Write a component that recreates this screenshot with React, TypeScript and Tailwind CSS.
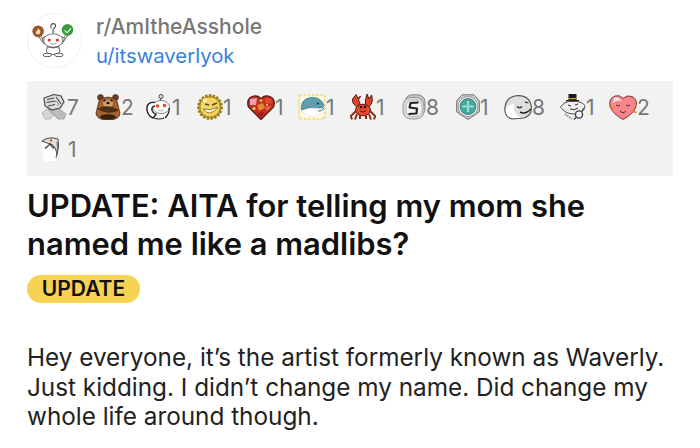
import type { ReactNode } from "react";

const Handshake = () => (
  <svg viewBox="0 0 26 26" className="w-[26px] h-[26px]">
    <path d="M1 19 L10 12 L16 18 L9 25 L4 25 Z" fill="#d6d6d6" stroke="#a0a0a0" strokeWidth="0.7" />
    <path d="M13 11 L25 20 L23 25 L17 25 L7 16 Z" fill="#bdbdbd" stroke="#8f8f8f" strokeWidth="0.7" />
    <path d="M3 4 L13 0.5 L20 2 L23 8 L19 14 L11 16 L4 12 Z" fill="#dcdcdc" stroke="#4a4a4a" strokeWidth="1.2" />
    <path d="M6 5.5 L13 4 M5.5 8.5 L14 7 M7 12 L14 10.5 M15 3 L20 10" stroke="#4a4a4a" strokeWidth="1.1" fill="none" />
    <path d="M14 7 Q18 8 17 12" stroke="#777" strokeWidth="0.8" fill="none" />
  </svg>
);

const Bear = () => (
  <svg viewBox="0 0 26 26" className="w-[26px] h-[26px]">
    <circle cx="5.5" cy="3.5" r="3" fill="#6b3d1c" stroke="#2e1808" strokeWidth="0.5" />
    <circle cx="20.5" cy="3.5" r="3" fill="#6b3d1c" stroke="#2e1808" strokeWidth="0.5" />
    <path d="M4 7 Q13 -1 22 7 L25 19 Q25 26 13 26 Q1 26 1 19 Z" fill="#a4632f" stroke="#3f2410" strokeWidth="0.7" />
    <ellipse cx="13" cy="9.5" rx="5" ry="3.5" fill="#d0a273" />
    <circle cx="9.5" cy="6.5" r="1.1" fill="#1d1008" />
    <circle cx="16.5" cy="6.5" r="1.1" fill="#1d1008" />
    <ellipse cx="13" cy="9" rx="1.7" ry="1.2" fill="#1d1008" />
    <path d="M3 15 Q13 10 23 16 Q14 21 3 15 Z" fill="#63381a" stroke="#2e1808" strokeWidth="0.7" />
    <path d="M7 15 Q14 14 20 17" stroke="#2e1808" strokeWidth="0.8" fill="none" />
    <ellipse cx="13" cy="23" rx="8" ry="2.8" fill="#3a200e" />
  </svg>
);

const Snoo = () => (
  <svg viewBox="0 0 26 26" className="w-[26px] h-[26px]">
    <circle cx="15" cy="2.5" r="2" fill="#e8e8e8" stroke="#444" strokeWidth="1" />
    <path d="M14.5 4.5 L14 8" stroke="#444" strokeWidth="1" />
    <ellipse cx="15" cy="13" rx="8.5" ry="6.5" fill="#fff" stroke="#666" strokeWidth="0.8" />
    <circle cx="11.5" cy="12" r="1.8" fill="#e8492a" />
    <circle cx="18.5" cy="11.5" r="1.8" fill="#e8492a" />
    <path d="M12.5 16 Q15 18 18 16" stroke="#999" strokeWidth="0.8" fill="none" />
    <path d="M9 8.5 Q1.5 7.5 0.8 14 Q0.8 21 7 24 L10 20.5 Q5 18 6 14 Q7 12 9 12" fill="#fff" stroke="#222" strokeWidth="1.4" />
    <path d="M23 14 Q24 19 19 24" stroke="#222" strokeWidth="1.4" fill="none" />
    <path d="M8 24 Q13 26 18 24" stroke="#222" strokeWidth="1.2" fill="none" />
  </svg>
);

const Sun = () => (
  <svg viewBox="0 0 26 26" className="w-[26px] h-[26px]">
    <circle cx="13" cy="13" r="11.6" fill="#c9a53a" strokeDasharray="2.4 1.4" stroke="#9a7d22" strokeWidth="2.6" />
    <circle cx="13" cy="13" r="10" fill="#f3d565" stroke="#a88520" strokeWidth="0.8" />
    <path d="M8 10 L12 11 M15 11 L20 9" stroke="#5e4a10" strokeWidth="1.4" />
    <path d="M6 15 Q13 24 21 13 Q14 17 6 15 Z" fill="#fff8d8" stroke="#7f6716" strokeWidth="0.8" />
    <circle cx="8" cy="6.5" r="2.2" fill="#fff0a8" />
  </svg>
);

const GemHeart = () => (
  <svg viewBox="0 0 28 26" className="w-[28px] h-[26px]">
    <path d="M14 25.5 L1.5 13 Q-1 5 5 2.5 Q11 0.5 14 5 Q17 0.5 23 2.5 Q29 5 26.5 13 Z" fill="#c22f1f" stroke="#5c1a12" strokeWidth="1.3" />
    <path d="M3 5 L10 4 L9 11 L3 11 Z" fill="#e6a0bd" />
    <path d="M10 11 L16 9 L18 14 L12 17 Z" fill="#e9862f" />
    <path d="M18 4 L25 5 L24 10 L18 9 Z" fill="#de4a32" />
    <path d="M11 19 L17 18 L14 23 Z" fill="#8f1e14" />
    <path d="M18 13 L25 12 L20 17 Z" fill="#eb6a3e" />
    <circle cx="7" cy="14.5" r="1.6" fill="#f5c75a" />
    <circle cx="14" cy="6.5" r="1.3" fill="#f5c75a" />
    <circle cx="20" cy="11" r="1" fill="#f9e2a5" />
  </svg>
);

const SealStamp = () => (
  <svg viewBox="0 0 28 26" className="w-[28px] h-[26px]">
    <rect x="1.2" y="1.2" width="25.6" height="23.6" fill="#fffbe0" stroke="#efdf93" strokeWidth="2" strokeDasharray="3 1.2" />
    <ellipse cx="14.5" cy="13" rx="11.5" ry="9.5" fill="#fff" stroke="#c9d6d8" strokeWidth="0.5" />
    <path d="M3.5 16 Q2.5 4 14 3.5 Q24 3.5 26 12 Q25 14.5 21 14 Q12 12 3.5 16 Z" fill="#5c9fb0" stroke="#37707e" strokeWidth="0.7" />
    <path d="M20 17 Q23 18 26 14" stroke="#37707e" strokeWidth="1" fill="none" />
    <circle cx="20" cy="9.5" r="1" fill="#123" />
  </svg>
);

const Crab = () => (
  <svg viewBox="0 0 26 26" className="w-[26px] h-[26px]">
    <path d="M6 0.5 L2.5 5 Q2 11 8 13 L10 9 L8.5 6 L10.5 2 L8 4.5 Z" fill="#e0452c" stroke="#5b1a10" strokeWidth="1" />
    <path d="M17 0 L15.5 6 L15.5 11 L19 13 Q24 8 21.5 1 L19 5 Z" fill="#e0452c" stroke="#5b1a10" strokeWidth="1" />
    <ellipse cx="13" cy="16" rx="7.5" ry="5.8" fill="#e04a2e" stroke="#5b1a10" strokeWidth="1" />
    <path d="M6 17 L0.8 22 L2 25.5 M7 20 L5 25.5 M20 17 L25.2 22 L24 25.5 M19 20 L21 25.5 M10 21 L10 25 M16 21 L16 25" stroke="#8c2a18" strokeWidth="2" fill="none" />
    <circle cx="11" cy="13" r="1.2" fill="#1d0b07" />
    <circle cx="15" cy="13" r="1.2" fill="#1d0b07" />
    <path d="M10 17 Q13 19 16 17" stroke="#5b1a10" strokeWidth="0.9" fill="none" />
  </svg>
);

const Coin = () => (
  <svg viewBox="0 0 24 26" className="w-[24px] h-[26px]">
    <rect x="3" y="0.8" width="20" height="21" rx="7" fill="#c4c4c4" stroke="#8a8a8a" strokeWidth="1" />
    <rect x="1" y="3.5" width="21" height="21.5" rx="8" fill="#dedede" stroke="#949494" strokeWidth="1" />
    <rect x="4" y="6" width="16" height="16.5" rx="6" fill="#f4f4f4" stroke="#a6a6a6" strokeWidth="0.8" />
    <path d="M16.5 8.5 L8.5 9 L7.5 13.5 L15 14.5 L14.5 19.5 L6.5 20" stroke="#222" strokeWidth="2.1" fill="none" strokeLinejoin="round" />
  </svg>
);

const Medal = () => (
  <svg viewBox="0 0 24 26" className="w-[24px] h-[26px]">
    <path d="M3 4 L6 0.8 L18 0.8 L21 4 L23.3 7 L23.3 18 L12 25.5 L0.7 18 L0.7 7 Z" fill="#c9c9c9" stroke="#777" strokeWidth="1" />
    <circle cx="12" cy="12.5" r="10" fill="#f0f0f0" stroke="#8c8c8c" strokeWidth="0.8" />
    <circle cx="12" cy="12.5" r="8" fill="#45a9a0" stroke="#2c7a73" strokeWidth="0.8" />
    <path d="M12 7 L12 18 M6.5 12.5 L17.5 12.5" stroke="#c5ece8" strokeWidth="1.6" />
    <circle cx="12" cy="12.5" r="2.2" fill="#8ad6ce" />
  </svg>
);

const SealFace = () => (
  <svg viewBox="0 0 28 26" className="w-[28px] h-[26px]">
    <path d="M0.8 15 Q1.5 2.5 14 1.5 Q25.5 1.5 27.3 12 Q28 22 20 24 L8 25 Q0.8 23 0.8 15 Z" fill="#dedede" stroke="#4c4c4c" strokeWidth="1.1" />
    <path d="M1.6 16 Q2.5 24 9 24 L17 24 Q9 20 10 10 Q3.5 10 1.6 16 Z" fill="#fff" />
    <path d="M13 12.5 Q15.5 15 18 12.5 M21 8 L24.5 9" stroke="#222" strokeWidth="1.2" fill="none" />
    <path d="M16 18 Q21 21 27 15" stroke="#222" strokeWidth="1.5" fill="none" />
  </svg>
);

const TopHat = () => (
  <svg viewBox="0 0 26 26" className="w-[26px] h-[26px]">
    <rect x="8.5" y="0" width="8" height="6" fill="#1b1b1b" />
    <rect x="8.5" y="4" width="8" height="1.2" fill="#c9a92c" />
    <rect x="6" y="6" width="13" height="1.5" fill="#1b1b1b" />
    <path d="M0.5 13 Q5 6.5 13 7.5 Q23 7 25 12 Q24 20 14 20 Q5 20 0.5 13 Z" fill="#ededed" stroke="#555" strokeWidth="1" />
    <path d="M8 11 L11 12 M15 11 L18 10 M10 15 Q14 17 18 14" stroke="#333" strokeWidth="1" fill="none" />
    <circle cx="19" cy="20.5" r="3.6" fill="#f2f2f2" stroke="#444" strokeWidth="1.4" />
    <path d="M16.5 23 L14 25.5 M22 17 L24 14" stroke="#444" strokeWidth="1.3" />
    <path d="M5 20 L12 25" stroke="#8f8f8f" strokeWidth="2" strokeDasharray="1.5 1" />
  </svg>
);

const FaceHeart = () => (
  <svg viewBox="0 0 28 26" className="w-[28px] h-[26px]">
    <path d="M14 25.5 Q4 20 1.2 13 Q-0.8 4.5 6 2 Q11 0.5 14 4.5 Q18 0.5 23 2.5 Q29.5 5.5 26.5 14 Q23 21 14 25.5 Z" fill="#f6868a" stroke="#7d3b3e" strokeWidth="1" />
    <path d="M5 3.5 Q10 2.5 13 7 Q8 5 3.5 9.5 Z" fill="#ffdcdc" />
    <path d="M7 11 Q9 13 11 11 M17 11 Q19 13 21 11 M11 17 Q14 20.5 17 17" stroke="#5c2a2c" strokeWidth="1" fill="none" />
    <path d="M0.5 13 L5.5 14.5 M22.5 17 L27.5 18.5" stroke="#ee7a22" strokeWidth="1.5" />
  </svg>
);

const Dolphin = () => (
  <svg viewBox="0 0 26 26" className="w-[26px] h-[26px]">
    <path d="M3 5 Q10 0 19 3 Q20 10 18 18 L17 25 L5 25.5 Q3 15 3 5 Z" fill="#fff" />
    <path d="M3 5 Q10 0 19 3 Q20.5 10 18 19 Q17 10 12 8 Q7 7 3 5 Z" fill="#e0e0e0" stroke="#444" strokeWidth="1" />
    <circle cx="12" cy="4.5" r="1.2" fill="#e8492a" />
    <path d="M6 12.5 L11 8 L15 12.5" stroke="#333" strokeWidth="1.2" fill="none" />
    <path d="M18 6 Q19.5 14 17 22" stroke="#6a6a6a" strokeWidth="1.2" fill="none" />
  </svg>
);

const Avatar = () => (
  <svg viewBox="0 0 55 55" className="w-full h-full">
    <path d="M11 22 L18 31 M41 21 L34 31" stroke="#555" strokeWidth="2.6" />
    <path d="M11 22 L18 31 M41 21 L34 31" stroke="#fff" strokeWidth="1.2" />
    <circle cx="10.5" cy="18" r="6" fill="#a0562a" />
    <path d="M8 19 L11 15 L13 18 L12 21 L9 21 Z" fill="#f2dfcb" />
    <circle cx="41" cy="16.5" r="6" fill="#3b9a3c" />
    <path d="M38 17 L40.5 19.5 L44.5 15" stroke="#fff" strokeWidth="1.1" fill="none" />
    <path d="M24 15 Q23 10 26 10 Q29 10 28.5 13 L26 16 L26 20" stroke="#444" strokeWidth="1.1" fill="none" />
    <circle cx="17" cy="26" r="2.2" fill="#fff" stroke="#444" strokeWidth="0.8" />
    <circle cx="35.5" cy="26" r="2.2" fill="#fff" stroke="#444" strokeWidth="0.8" />
    <ellipse cx="26.2" cy="27.5" rx="10" ry="7" fill="#fff" stroke="#444" strokeWidth="0.8" />
    <circle cx="22" cy="27" r="1.7" fill="#d8462a" />
    <circle cx="30.5" cy="27" r="1.7" fill="#d8462a" />
    <path d="M23 30.5 Q26.2 32.5 29.5 30.5" stroke="#666" strokeWidth="0.7" fill="none" />
    <path d="M20 34 Q26 36.5 32 34 L33 39 L31 41 Q26 43 21 41 L19 39 Z" fill="#fff" stroke="#444" strokeWidth="0.9" />
    <ellipse cx="20" cy="42.5" rx="4.5" ry="1.8" fill="#fff" stroke="#444" strokeWidth="0.9" />
    <ellipse cx="32" cy="42.5" rx="4.5" ry="1.8" fill="#fff" stroke="#444" strokeWidth="0.9" />
  </svg>
);

type Award = { icon: ReactNode; count: number; width: string };

const awards: Award[] = [
  { icon: <Handshake />, count: 7, width: "w-[54px]" },
  { icon: <Bear />, count: 2, width: "w-[51px]" },
  { icon: <Snoo />, count: 1, width: "w-[51px]" },
  { icon: <Sun />, count: 1, width: "w-[50px]" },
  { icon: <GemHeart />, count: 1, width: "w-[51px]" },
  { icon: <SealStamp />, count: 1, width: "w-[52px]" },
  { icon: <Crab />, count: 1, width: "w-[52px]" },
  { icon: <Coin />, count: 8, width: "w-[54px]" },
  { icon: <Medal />, count: 1, width: "w-[48px]" },
  { icon: <SealFace />, count: 8, width: "w-[56px]" },
  { icon: <TopHat />, count: 1, width: "w-[49px]" },
  { icon: <FaceHeart />, count: 2, width: "w-[42px]" },
];

export default function App() {
  return (
    <div className="w-[700px] h-[448px] overflow-hidden bg-white font-['Inter','Liberation_Sans',sans-serif]">
      <div className="px-[27px] pt-[13px]">
        <div className="flex items-center gap-[14px] h-[55px]">
          <div className="w-[55px] h-[55px] rounded-full border border-[#f0f0f0]">
            <Avatar />
          </div>
          <div className="flex flex-col leading-[29px]">
            <span className="text-[21px] text-[#777777] font-medium">r/AmItheAsshole</span>
            <span className="text-[20.3px] text-[#3a80dc]">u/itswaverlyok</span>
          </div>
        </div>

        <div className="mt-[13px] h-[95px] bg-[#f2f2f2] pl-[14px] pt-[13px]">
          <div className="flex flex-wrap">
            {awards.map((a, i) => (
              <div key={i} className={`${a.width} h-[26px] flex items-center text-[21px] leading-none text-[#777777]`}>
                {a.icon}
                <span>{a.count}</span>
              </div>
            ))}
          </div>
          <div className="mt-[16px] ml-[-2px] flex items-center gap-[3px] h-[26px] text-[21px] leading-none text-[#777777]">
            <Dolphin />
            <span>1</span>
          </div>
        </div>

        <h1 className="mt-[11px] text-[30.9px] leading-[38px] font-semibold text-[#111111]">
          UPDATE: AITA for telling my mom she
          <br />
          named me like a madlibs?
        </h1>

        <div className="mt-[12px] w-[113px] h-[28px] rounded-full bg-[#f7d354] flex items-center justify-center text-[21px] font-semibold text-[#111111]">
          UPDATE
        </div>

        <p className="mt-[40px] text-[24.3px] leading-[29.5px] text-[#222222]">
          Hey everyone, it’s the artist formerly known as Waverly.
          <br />
          Just kidding. I didn’t change my name. Did change my
          <br />
          whole life around though.
        </p>
      </div>
    </div>
  );
}
